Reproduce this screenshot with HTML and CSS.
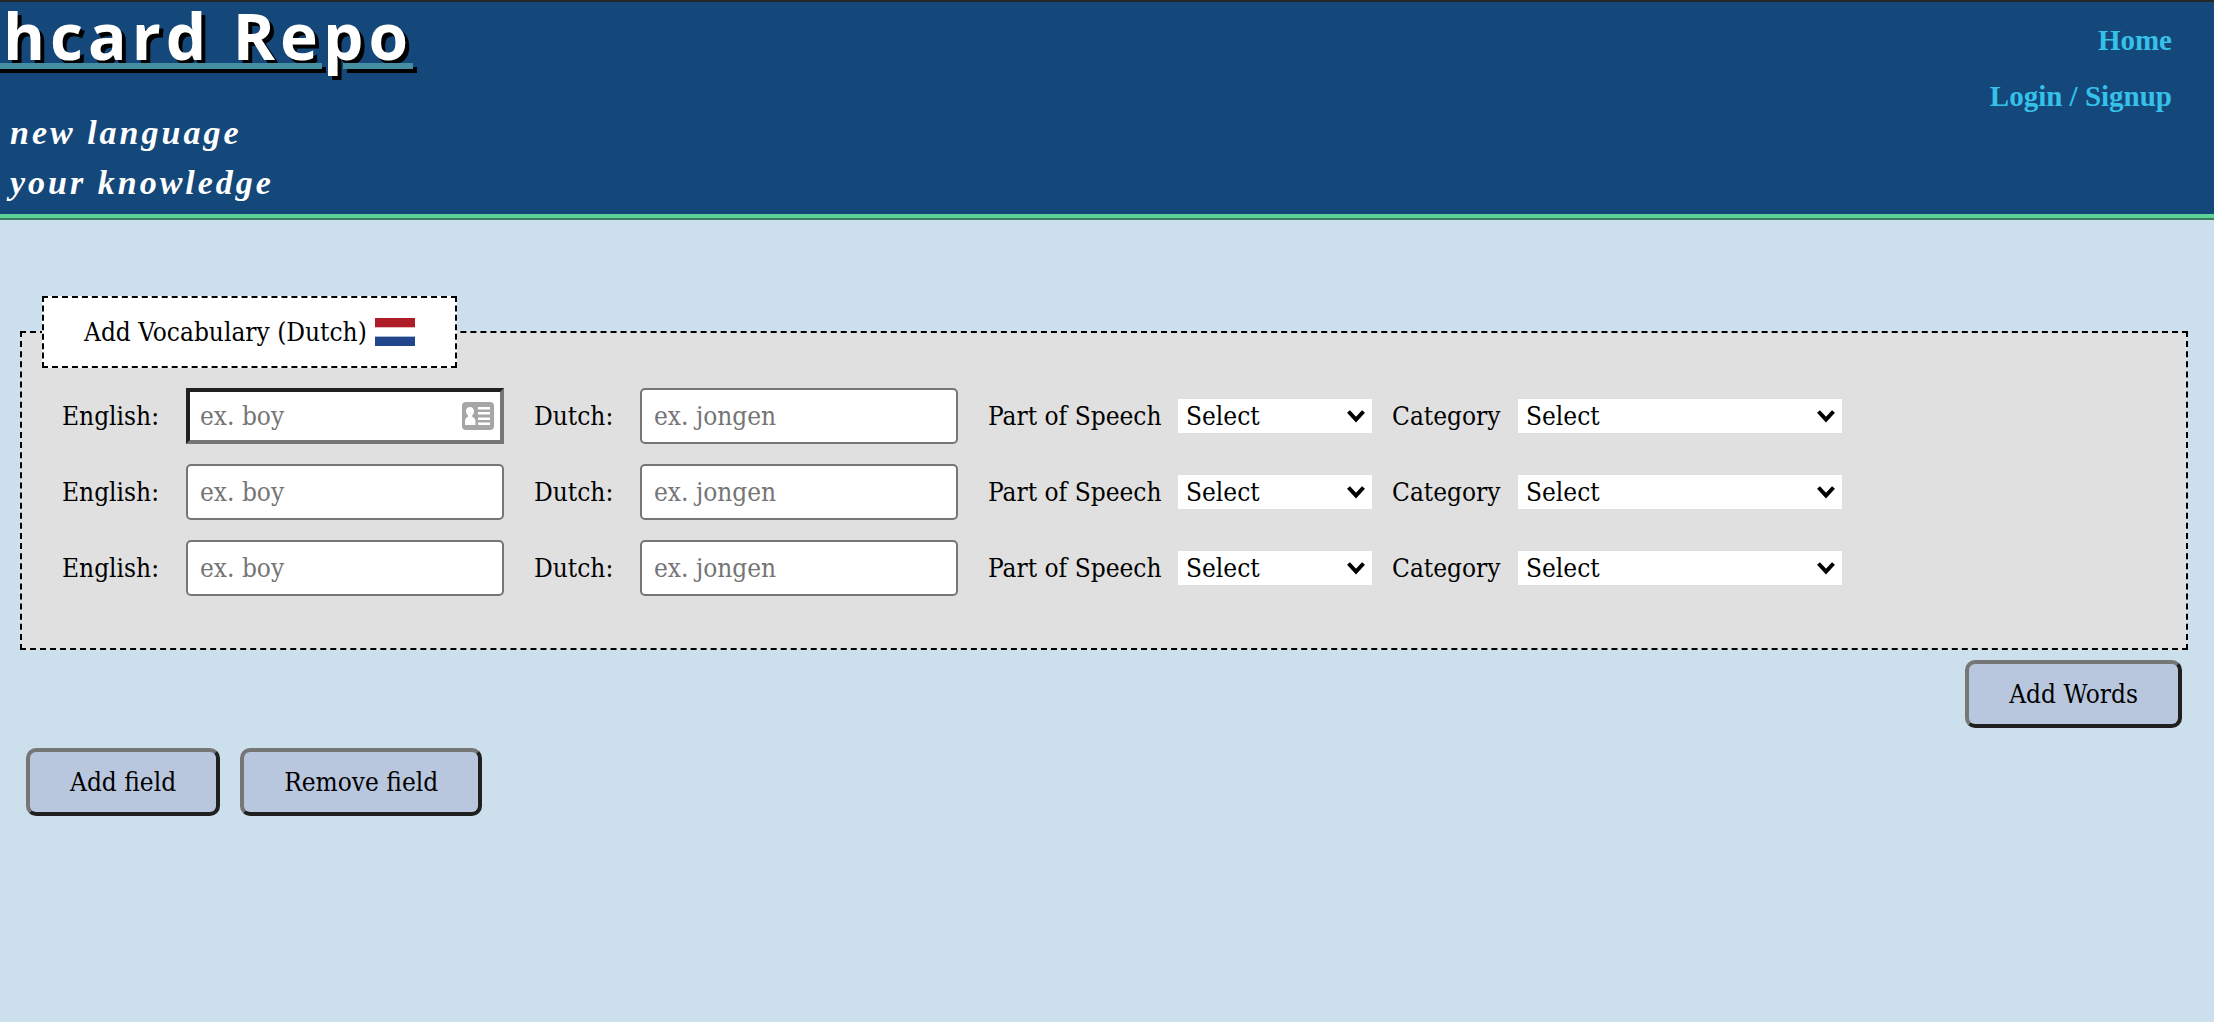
FILE: index.html
```html
<!DOCTYPE html>
<html lang="en">
<head>
  <meta charset="utf-8">
  <meta name="viewport" content="width=device-width, initial-scale=1">
  <title>Flashcard Repo</title>
  <link rel="stylesheet" href="styles.css">
</head>
<body>
  <header class="site-header">
    <div class="brand">
      <h1 class="brand-title">Flashcard Repo</h1>
      <p class="tagline">new language<br>your knowledge</p>
    </div>
    <nav class="site-nav">
      <a href="#home">Home</a>
      <a href="#login">Login / Signup</a>
    </nav>
  </header>

  <main class="page">
    <form class="vocab-form">
      <fieldset class="vocab">
        <legend class="vocab-legend">
          <span class="legend-inner">
            Add Vocabulary (Dutch)
            <svg class="flag" viewBox="0 0 40 28" role="img" aria-label="Flag of the Netherlands">
              <rect width="40" height="28" fill="#fff"/>
              <rect width="40" height="9" fill="#ae1c28"/>
              <rect y="9" width="40" height="1" fill="#e8b9bd"/>
              <rect y="18" width="40" height="1" fill="#a9b9d8"/>
              <rect y="19" width="40" height="9" fill="#21468b"/>
            </svg>
          </span>
        </legend>

        <div class="word-row">
          <div class="field">
            <label class="label-english" for="english-1">English:</label>
            <span class="input-wrap">
              <input class="text-input text-input-active" id="english-1" type="text" placeholder="ex. boy">
              <svg class="card-icon" viewBox="0 0 32 28" aria-hidden="true">
                <rect width="32" height="28" rx="4" fill="#a6a6a6"/>
                <path fill="#fff" d="M8 5c2.500 0 4 1.700 4 4.200 0 1.800-.8 3.200-1.800 4v1.600c2 .6 3.300 2.200 3.300 4.700V23H3v-3.500c0-2.500 1.200-4.100 3-4.700v-1.600c-1.100-.8-2-2.200-2-4C4 6.700 5.500 5 8 5zM16 5h12v2.500H16zM16 10h12v2.500H16zM16 15.500h12V18H16zM16 20.500h12V23H16z"/>
              </svg>
            </span>
          </div>
          <div class="field">
            <label class="label-dutch" for="dutch-1">Dutch:</label>
            <input class="text-input" id="dutch-1" type="text" placeholder="ex. jongen">
          </div>
          <div class="field">
            <label class="label-speech" for="speech-1">Part of Speech</label>
            <select class="select select-speech" id="speech-1"><option>Select</option></select>
            <label class="label-category" for="category-1">Category</label>
            <select class="select select-category" id="category-1"><option>Select</option></select>
          </div>
        </div>

        <div class="word-row">
          <div class="field">
            <label class="label-english" for="english-2">English:</label>
            <input class="text-input" id="english-2" type="text" placeholder="ex. boy">
          </div>
          <div class="field">
            <label class="label-dutch" for="dutch-2">Dutch:</label>
            <input class="text-input" id="dutch-2" type="text" placeholder="ex. jongen">
          </div>
          <div class="field">
            <label class="label-speech" for="speech-2">Part of Speech</label>
            <select class="select select-speech" id="speech-2"><option>Select</option></select>
            <label class="label-category" for="category-2">Category</label>
            <select class="select select-category" id="category-2"><option>Select</option></select>
          </div>
        </div>

        <div class="word-row">
          <div class="field">
            <label class="label-english" for="english-3">English:</label>
            <input class="text-input" id="english-3" type="text" placeholder="ex. boy">
          </div>
          <div class="field">
            <label class="label-dutch" for="dutch-3">Dutch:</label>
            <input class="text-input" id="dutch-3" type="text" placeholder="ex. jongen">
          </div>
          <div class="field">
            <label class="label-speech" for="speech-3">Part of Speech</label>
            <select class="select select-speech" id="speech-3"><option>Select</option></select>
            <label class="label-category" for="category-3">Category</label>
            <select class="select select-category" id="category-3"><option>Select</option></select>
          </div>
        </div>
      </fieldset>
      <div class="actions actions-submit">
        <button class="button" type="submit">Add Words</button>
      </div>
    </form>
    <div class="actions">
      <button class="button" type="button">Add field</button>
      <button class="button" type="button">Remove field</button>
    </div>
  </main>
</body>
</html>
```
FILE: styles.css
```css
* {
  box-sizing: border-box;
}

body {
  margin: 0;
  background: #ccdfec;
  color: #000;
  font-family: "DejaVu Serif Condensed", "DejaVu Serif", serif;
  font-size: 26px;
  line-height: 32px;
}

.site-header {
  display: flex;
  justify-content: space-between;
  padding-bottom: 6px;
  border-top: 2px solid #262626;
  border-bottom: 4px solid #5fd397;
  background: #14477a;
  overflow: hidden;
}

/* The title is anchored by its right end and runs off the left edge. */
.brand {
  display: flex;
  flex-direction: column;
  width: 413px;
}

.brand-title {
  align-self: flex-end;
  margin: 0;
  color: #fff;
  font-family: "Open Sans", sans-serif;
  font-size: 64px;
  font-weight: 700;
  line-height: 68px;
  letter-spacing: 5px;
  white-space: nowrap;
  text-decoration: underline 6px #468fa3;
  text-underline-offset: 3px;
  text-shadow: 4px 4px 0 #000;
}

.tagline {
  margin: 38px 0 0;
  padding-left: 10px;
  color: #fff;
  font-family: "Liberation Serif", serif;
  font-size: 34px;
  font-style: italic;
  font-weight: 700;
  line-height: 50px;
  letter-spacing: 3px;
}

.site-nav {
  display: flex;
  flex-direction: column;
  align-items: flex-end;
  padding: 10px 42px 0 0;
  font-family: "Liberation Serif", serif;
  font-size: 29px;
  font-weight: 700;
  line-height: 56px;
}

.site-nav a {
  color: #35c1e8;
  text-decoration: none;
}

.page {
  padding: 76px 26px 40px 20px;
  border-top: 2px solid #3c7f60;
}

.vocab {
  margin: 0;
  padding: 20px 20px 32px;
  border: 2px dashed #000;
  background: #e0e0e0;
}

.vocab-legend {
  padding: 18px 40px;
  border: 2px dashed #000;
  background: #fff;
}

.legend-inner {
  display: flex;
  align-items: center;
  gap: 8px;
}

.flag {
  width: 40px;
  height: 28px;
}

.word-row {
  display: flex;
  flex-wrap: wrap;
  gap: 20px 30px;
  margin-bottom: 20px;
  padding-left: 20px;
}

.field {
  display: flex;
  align-items: center;
}

.label-english {
  width: 124px;
}

.label-dutch {
  width: 106px;
}

.label-speech {
  width: 190px;
}

.label-category {
  width: 126px;
  margin-left: 20px;
}

.input-wrap {
  position: relative;
}

.text-input {
  display: block;
  width: 318px;
  height: 56px;
  padding: 0 12px;
  border: 2px solid #767676;
  border-radius: 5px;
  background: #fff;
  color: #000;
  font: inherit;
}

.text-input::placeholder {
  color: #757575;
  opacity: 1;
}

.text-input-active {
  padding: 0 10px;
  border-width: 4px;
  border-color: #202020 #767676 #767676 #202020;
  border-radius: 0;
}

.card-icon {
  position: absolute;
  top: 14px;
  right: 10px;
  width: 32px;
  height: 28px;
}

.select {
  height: 34px;
  padding: 0 32px 0 8px;
  border: 0;
  border-radius: 0;
  appearance: none;
  background: #fff url("data:image/svg+xml,%3Csvg xmlns='http://www.w3.org/2000/svg' width='20' height='14'%3E%3Cpath d='M2.500 2.500 10 10.500 17.500 2.500' fill='none' stroke='%23000' stroke-width='4'/%3E%3C/svg%3E") no-repeat right 6px center;
  color: #000;
  font: inherit;
}

.select-speech {
  width: 194px;
}

.select-category {
  width: 324px;
}

.actions {
  display: flex;
  gap: 20px;
  padding: 20px 6px 0;
}

.actions-submit {
  justify-content: flex-end;
  padding-top: 10px;
}

.button {
  height: 68px;
  padding: 0 40px;
  border: 4px solid;
  border-color: #767676 #202020 #202020 #767676;
  border-radius: 10px;
  background: #b8c7de;
  color: #000;
  font: inherit;
}
```
